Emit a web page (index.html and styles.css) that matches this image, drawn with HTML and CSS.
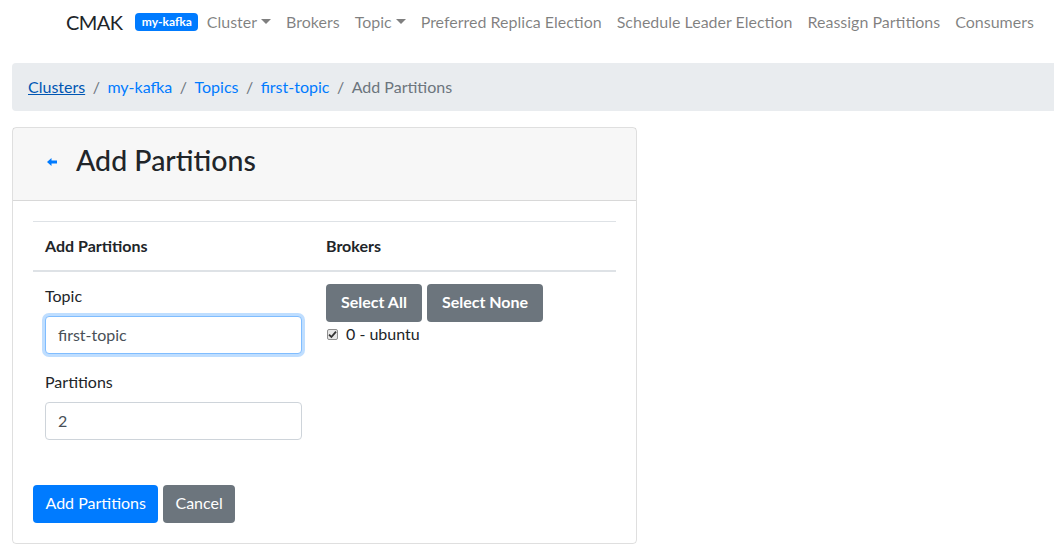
FILE: index.html
```html
<!DOCTYPE html>
<html>
<head>
<meta charset="utf-8">
<link rel="stylesheet" href="styles.css">
</head>
<body>
<nav class="navbar">
  <span class="brand">CMAK</span>
  <span class="badge">my-kafka</span>
  <ul class="nav">
    <li class="nav-link">Cluster<span class="caret"></span></li>
    <li class="nav-link">Brokers</li>
    <li class="nav-link">Topic<span class="caret"></span></li>
    <li class="nav-link">Preferred Replica Election</li>
    <li class="nav-link">Schedule Leader Election</li>
    <li class="nav-link">Reassign Partitions</li>
    <li class="nav-link">Consumers</li>
  </ul>
</nav>
<main class="main">
  <ol class="breadcrumb">
    <li><a class="crumb crumb-hover" href="#">Clusters</a></li>
    <li class="sep">/</li>
    <li><a class="crumb" href="#">my-kafka</a></li>
    <li class="sep">/</li>
    <li><a class="crumb" href="#">Topics</a></li>
    <li class="sep">/</li>
    <li><a class="crumb" href="#">first-topic</a></li>
    <li class="sep">/</li>
    <li class="active">Add Partitions</li>
  </ol>
  <section class="card">
    <header class="card-header">
      <a class="back" href="#"><svg width="10" height="8" viewBox="0 0 10 8"><path d="M0 4 L4.5 0 V2.6 H10 V5.4 H4.5 V8 Z" fill="#007bff"/></svg></a>
      <h3 class="title">Add Partitions</h3>
    </header>
    <div class="card-body">
      <table class="table">
        <colgroup><col class="col-first"><col></colgroup>
        <thead>
          <tr><th>Add Partitions</th><th>Brokers</th></tr>
        </thead>
        <tbody>
          <tr>
            <td>
              <div class="form-group">
                <label class="label">Topic</label>
                <div class="input focus">first-topic</div>
              </div>
              <div class="form-group">
                <label class="label">Partitions</label>
                <div class="input">2</div>
              </div>
            </td>
            <td>
              <div class="btn-row">
                <span class="btn btn-secondary btn-bold">Select All</span>
                <span class="btn btn-secondary btn-bold">Select None</span>
              </div>
              <div class="check-row">
                <span class="checkbox"><svg width="9" height="9" viewBox="0 0 9 9"><path d="M1 4.6 L3.4 7 L8 1.6" fill="none" stroke="#333" stroke-width="1.8"/></svg></span>
                <span>0 - ubuntu</span>
              </div>
            </td>
          </tr>
        </tbody>
      </table>
      <div class="actions">
        <span class="btn btn-primary">Add Partitions</span>
        <span class="btn btn-secondary">Cancel</span>
      </div>
    </div>
  </section>
</main>
</body>
</html>
```
FILE: styles.css
```css
* { box-sizing: border-box; }
html, body { margin: 0; padding: 0; }
body {
  font-family: Lato, "Open Sans", sans-serif;
  font-size: 16px;
  line-height: 1.5;
  color: #212529;
  background: #fff;
  overflow: hidden;
  width: 1054px;
  height: 559px;
}
.navbar {
  display: flex;
  align-items: center;
  height: 43px;
  padding-left: 66px;
}
.brand {
  font-size: 20px;
  margin-right: 13px;
  color: #212529;
  letter-spacing: -0.6px;
}
.badge {
  display: inline-block;
  background: #007bff;
  color: #fff;
  font-size: 12px;
  font-weight: 700;
  line-height: 1;
  padding: 3px 6.5px;
  border-radius: 4px;
  margin-right: 1px;
}
.nav {
  display: flex;
  list-style: none;
  margin: 0;
  padding: 0;
}
.nav-link {
  padding: 0 7.5px;
  color: rgba(0,0,0,.5);
}
.caret {
  display: inline-block;
  margin-left: 4px;
  vertical-align: 4px;
  border-top: 5px solid;
  border-left: 5px solid transparent;
  border-right: 5px solid transparent;
}
.main {
  padding-left: 12px;
}
.breadcrumb {
  display: flex;
  list-style: none;
  margin: 20px 0 16px 0;
  padding: 12px 16px;
  background: #e9ecef;
  border-radius: 4px 0 0 4px;
}
.crumb {
  color: #007bff;
  text-decoration: none;
}
.crumb-hover {
  color: #0056b3;
  text-decoration: underline;
}
.sep {
  padding: 0 7.5px;
  color: #6c757d;
}
.active { color: #6c757d; }
.card {
  width: 625px;
  border: 1px solid rgba(0,0,0,.125);
  border-radius: 4px;
}
.card-header {
  display: flex;
  align-items: center;
  height: 73px;
  background: rgba(0,0,0,.03);
  border-bottom: 1px solid rgba(0,0,0,.125);
}
.back {
  display: flex;
  margin-left: 34px;
  margin-right: 19px;
  margin-bottom: 4px;
}
.title {
  margin: 0 0 8px 0;
  font-size: 28.5px;
  font-weight: 500;
  line-height: 1.2;
}
.card-body {
  padding: 20px;
}
.table {
  width: 100%;
  border-collapse: collapse;
  margin-bottom: 17px;
  table-layout: fixed;
}
.col-first { width: 281px; }
.table th {
  text-align: left;
  font-weight: 700;
  padding: 12px;
  border-top: 1px solid #dee2e6;
  border-bottom: 2px solid #dee2e6;
}
.table td {
  vertical-align: top;
  padding: 12px;
}
.form-group { margin-bottom: 16px; }
.label {
  display: block;
  margin-bottom: 8px;
}
.input {
  width: 257px;
  height: 38px;
  padding: 6px 12px;
  border: 1px solid #ced4da;
  border-radius: 4px;
  color: #495057;
  background: #fff;
}
.input.focus {
  border-color: #80bdff;
  box-shadow: 0 0 0 3px rgba(0,123,255,.25);
}
.btn-row {
  display: flex;
  gap: 5px;
}
.btn {
  display: inline-block;
  height: 38px;
  padding: 6px 12px;
  border-radius: 4px;
  color: #fff;
  white-space: nowrap;
}
.btn-bold {
  font-weight: 700;
  padding: 6px 15px;
}
.btn-secondary { background: #6c757d; }
.btn-primary { background: #007bff; }
.check-row {
  display: flex;
  align-items: center;
  gap: 8px;
  padding-left: 1px;
  line-height: 24px;
}
.checkbox {
  display: inline-flex;
  align-items: center;
  justify-content: center;
  width: 11px;
  height: 11px;
  border: 1px solid #8f8f8f;
  border-radius: 2px;
  background: #e6e6e6;
}
.actions {
  display: flex;
  gap: 5px;
}
.actions .btn-primary { padding: 6px 12.5px; }
```
